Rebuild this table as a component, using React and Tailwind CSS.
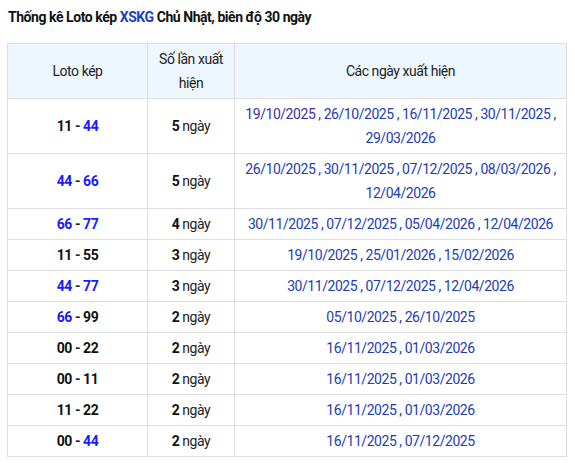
const rows = [
    { a: '11', ab: false, b: '44', bb: true, n: 5, dates: ['19/10/2025', '26/10/2025', '16/11/2025', '30/11/2025', '29/03/2026'] },
    { a: '44', ab: true, b: '66', bb: true, n: 5, dates: ['26/10/2025', '30/11/2025', '07/12/2025', '08/03/2026', '12/04/2026'] },
    { a: '66', ab: true, b: '77', bb: true, n: 4, dates: ['30/11/2025', '07/12/2025', '05/04/2026', '12/04/2026'] },
    { a: '11', ab: false, b: '55', bb: false, n: 3, dates: ['19/10/2025', '25/01/2026', '15/02/2026'] },
    { a: '44', ab: true, b: '77', bb: true, n: 3, dates: ['30/11/2025', '07/12/2025', '12/04/2026'] },
    { a: '66', ab: true, b: '99', bb: false, n: 2, dates: ['05/10/2025', '26/10/2025'] },
    { a: '00', ab: false, b: '22', bb: false, n: 2, dates: ['16/11/2025', '01/03/2026'] },
    { a: '00', ab: false, b: '11', bb: false, n: 2, dates: ['16/11/2025', '01/03/2026'] },
    { a: '11', ab: false, b: '22', bb: false, n: 2, dates: ['16/11/2025', '01/03/2026'] },
    { a: '00', ab: false, b: '44', bb: true, n: 2, dates: ['16/11/2025', '07/12/2025'] },
];

function Num({ v, blue }) {
    return <span className={blue ? 'text-[#1a1aff]' : 'text-[#111]'}>{v}</span>;
}

export default function App() {
    return (
        <div className="px-[7px] pt-[6px] font-['Roboto',sans-serif] text-[14px] tracking-[-0.45px] text-[#222] bg-white">
            <h2 className="font-bold text-[14px] leading-[22px] pl-px text-[#111]">
                Thống kê Loto kép <span className="text-[#1a3fc4]">XSKG</span> Chủ Nhật, biên độ 30 ngày
            </h2>
            <table className="mt-[15px] w-[560px] border-collapse border border-[#dedede] text-center leading-6">
                <thead>
                    <tr className="bg-[#eef6ff]">
                        <th className="w-[140px] border border-[#dedede] font-normal px-2 py-[3px]">Loto kép</th>
                        <th className="w-[87px] border border-[#dedede] font-normal px-2 py-[3px]">Số lần xuất hiện</th>
                        <th className="border border-[#dedede] font-normal px-2 py-[3px]">Các ngày xuất hiện</th>
                    </tr>
                </thead>
                <tbody>
                    {rows.map((r, i) => (
                        <tr key={i}>
                            <td className="border border-[#dedede] font-bold px-2 py-[3px]">
                                <Num v={r.a} blue={r.ab} /> - <Num v={r.b} blue={r.bb} />
                            </td>
                            <td className="border border-[#dedede] px-2 py-[3px]">
                                <b className="text-[#111]">{r.n}</b> ngày
                            </td>
                            <td className="border border-[#dedede] px-2 py-[3px] text-[#1d3cb4]">
                                {r.dates.map((d, j) => (
                                    <span key={j}>
                                        <span className={i === 0 && j === 0 ? 'text-[#3b2ea6]' : ''}>{d}</span>
                                        {j < r.dates.length - 1 ? ' , ' : ''}
                                    </span>
                                ))}
                            </td>
                        </tr>
                    ))}
                </tbody>
            </table>
        </div>
    );
}
